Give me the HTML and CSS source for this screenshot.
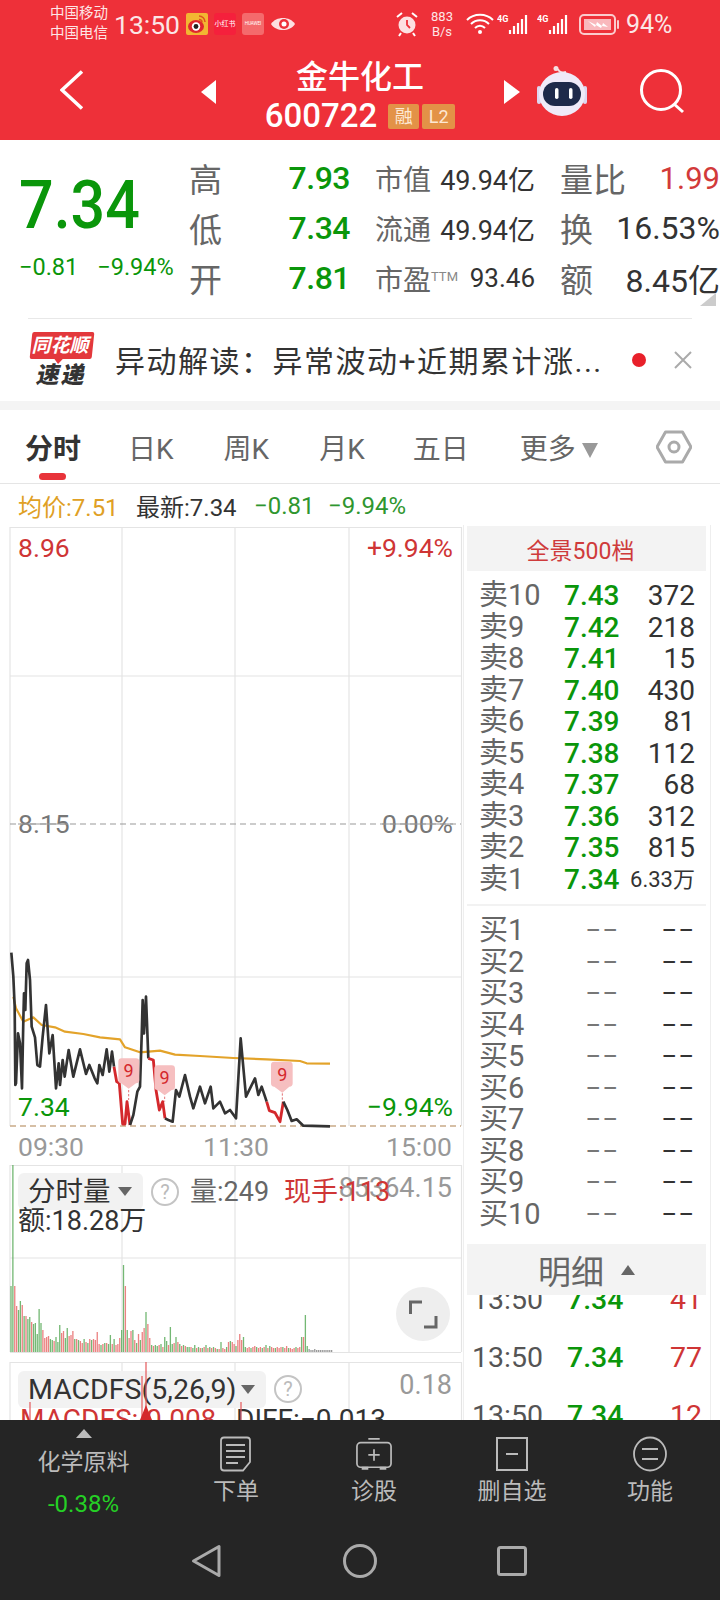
FILE: index.html
```html
<!DOCTYPE html>
<html lang="zh">
<head>
<meta charset="utf-8">
<title>金牛化工</title>
<link rel="stylesheet" href="styles.css">
</head>
<body>
<div class="page">
  <header class="header">
    <div class="status">
      <div class="carrier"><span>中国移动</span><span>中国电信</span></div>
      <div class="clock">13:50</div>
      <svg class="app-ic weibo" viewBox="0 0 22 22"><rect width="22" height="22" rx="2" fill="#f2b632"/><ellipse cx="10" cy="13.5" rx="8" ry="6.5" fill="#e0272e"/><circle cx="10" cy="13.5" r="4.2" fill="#fff"/><circle cx="10" cy="13.5" r="2.4" fill="#222"/><path d="M13 3a6 6 0 0 1 6 6M13 6.500a3 3 0 0 1 3 3" fill="none" stroke="#e0531f" stroke-width="1.500"/></svg>
      <div class="app-ic redbook">小红书</div>
      <div class="app-ic huawei">HUAWEI</div>
      <svg class="eye" viewBox="0 0 26 20"><path d="M1 10C6 2 20 2 25 10C20 18 6 18 1 10Z" fill="#fff" fill-opacity=".85"/><circle cx="14" cy="10" r="5" fill="#ee3039"/><circle cx="14" cy="10" r="2.500" fill="#fff"/></svg>
      <div class="status-right">
        <svg class="alarm" viewBox="0 0 22 26"><circle cx="11" cy="14" r="8.500" fill="#fff" fill-opacity=".85"/><path d="M11 9v5l3 3" stroke="#ee3039" stroke-width="1.800" fill="none"/><path d="M1 6l5-4M21 6l-5-4M5 22l-2 3M17 22l2 3" stroke="#fff" stroke-width="2" fill="none"/></svg>
        <div class="speed"><span>883</span><span>B/s</span></div>
        <svg class="wifi" viewBox="0 0 28 22"><path d="M1 7C8 0 20 0 27 7M5 11C10 6 18 6 23 11M9 15c3-3 7-3 10 0" fill="none" stroke="#fff" stroke-width="2"/><circle cx="14" cy="19" r="2" fill="#fff"/></svg>
        <svg class="signal" viewBox="0 0 34 22"><text x="0" y="9" class="net">4G</text><path d="M13 21v-4M17 21v-8M21 21v-11M25 21v-15M29 21v-19" stroke="#fff" stroke-width="2.200"/></svg>
        <svg class="signal" viewBox="0 0 34 22"><text x="0" y="9" class="net">4G</text><path d="M13 21v-4M17 21v-8M21 21v-11M25 21v-15M29 21v-19" stroke="#fff" stroke-width="2.200"/></svg>
        <svg class="battery" viewBox="0 0 40 21"><rect x="1" y="1" width="35" height="19" rx="4" fill="none" stroke="#fff" stroke-opacity=".75" stroke-width="2"/><rect x="5" y="5" width="27" height="11" fill="#f9b8bc"/><path d="M9 7l8 4 1-3 5 4 1-3 5 4-6-1-1 2-5-3-1 2z" fill="#fff"/><rect x="38" y="6" width="2" height="9" rx="1" fill="#fff" fill-opacity=".75"/></svg>
        <div class="pct">94%</div>
      </div>
    </div>
    <div class="nav">
      <svg class="back" viewBox="0 0 24 40"><path d="M22 1.500L2 20L22 38.500" fill="none" stroke="#fff" stroke-width="3.500"/></svg>
      <div class="tri-left"></div>
      <div class="title">
        <div class="name">金牛化工</div>
        <div class="code-row"><span class="code">600722</span><span class="badge badge-first">融</span><span class="badge">L2</span></div>
      </div>
      <div class="tri-right"></div>
      <svg class="robot" viewBox="0 0 50 52"><path d="M21 4c1 3 4 4 8 3" fill="none" stroke="#f6dfe2" stroke-width="2"/><circle cx="19" cy="3.500" r="2.500" fill="#f6dfe2"/><rect x="0" y="21" width="4" height="18" rx="2" fill="#ddd6f0"/><rect x="46" y="21" width="4" height="18" rx="2" fill="#ddd6f0"/><ellipse cx="25" cy="29" rx="23" ry="22" fill="#efeaf8"/><rect x="6" y="17" width="38" height="24" rx="12" fill="#1e2a4a"/><rect x="18" y="23" width="3.500" height="11" rx="1.750" fill="#fff"/><rect x="32" y="23" width="3.500" height="11" rx="1.750" fill="#fff"/></svg>
      <svg class="search" viewBox="0 0 46 46"><circle cx="22" cy="21" r="19.500" fill="none" stroke="#fff" stroke-width="3"/><path d="M35 35l9 8" stroke="#fff" stroke-width="3"/></svg>
    </div>
  </header>

  <section class="quote">
    <div class="price-box">
      <div class="big">7.34</div>
      <div class="change"><span>−0.81</span><span>−9.94%</span></div>
    </div>
    <div class="stats">
      <div class="stat-row">
        <span class="lab">高</span><span class="val">7.93</span>
        <span class="mid"><span class="mlab">市值</span><span class="mval">49.94亿</span></span>
        <span class="far"><span class="lab">量比</span><span class="fval red">1.99</span></span>
      </div>
      <div class="stat-row">
        <span class="lab">低</span><span class="val">7.34</span>
        <span class="mid"><span class="mlab">流通</span><span class="mval">49.94亿</span></span>
        <span class="far"><span class="lab">换</span><span class="fval">16.53%</span></span>
      </div>
      <div class="stat-row">
        <span class="lab">开</span><span class="val">7.81</span>
        <span class="mid"><span class="mlab">市盈<sup class="ttm">TTM</sup></span><span class="mval pe">93.46</span></span>
        <span class="far"><span class="lab">额</span><span class="fval">8.45亿</span></span>
      </div>
    </div>
    <div class="corner"></div>
  </section>

  <section class="news">
    <div class="logo">
      <div class="logo-top"><span>同花顺</span></div>
      <div class="logo-bottom">速递</div>
    </div>
    <div class="news-text">异动解读&#xFF1A;异常波动+近期累计涨...</div>
    <div class="dot"></div>
    <svg class="close" viewBox="0 0 18 18"><path d="M1 1l16 16M17 1L1 17" stroke="#aaa" stroke-width="2"/></svg>
  </section>
  <div class="gap"></div>

  <nav class="tabs">
    <span class="tab active">分时</span>
    <span class="tab t2">日K</span>
    <span class="tab t3">周K</span>
    <span class="tab t4">月K</span>
    <span class="tab t5">五日</span>
    <span class="tab t6">更多</span>
    <span class="more-tri"></span>
    <svg class="hex" viewBox="0 0 36 36"><path d="M9.500 3h17L35 18l-8.500 15h-17L1 18z" fill="none" stroke="#aaa" stroke-width="3" stroke-linejoin="round"/><circle cx="18" cy="18" r="5" fill="none" stroke="#aaa" stroke-width="3"/></svg>
  </nav>

  <div class="legend">
    <span class="l-avg">均价:7.51</span>
    <span class="l-new">最新:7.34</span>
    <span class="l-chg">−0.81</span>
    <span class="l-chg">−9.94%</span>
  </div>

  <main class="main">
    <div class="charts">
      <svg class="price-chart" viewBox="0 525 463 640">
        <path class="grid" d="M10 527.500H461M10 676H461M10 977H461M10 527V1126M122 527V1126M235 527V1126M349 527V1126M461.500 527V1126"/>
        <path class="mid-dash" d="M10 824H461"/>
        <path class="base-dash" d="M10 1126H461"/>
        <text class="ct red-t" x="18" y="557">8.96</text>
        <text class="ct red-t end" x="453" y="557">+9.94%</text>
        <text class="ct gray-t" x="18" y="833">8.15</text>
        <text class="ct gray-t end" x="453" y="833">0.00%</text>
        <path class="strike" d="M18 824H68M382 824H453"/>
        <g transform="translate(0 920) scale(.33333)">
          <path class="avg" d="M40 230L48 265L70 305L100 292L125 315L165 322L195 335L250 342L300 352L360 358L375 382L420 397L480 392L525 404L600 408L700 414L800 418L900 423L920 430L990 431"/>
          <path class="line-b" d="M34 98L40 170L44 260L46 495L48 490L54 340L60 370L66 505L70 300L72 220L76 270L80 130L84 120L90 180L95 320L105 352L112 435L120 440L128 350L138 255L148 400L158 345L168 505L176 430L180 495L188 420L194 470L206 390L220 470L240 388L258 462L268 435L284 475L292 490L298 435L308 465L320 388L328 455L336 395L342 440"/>
          <path class="line-r" d="M342 440L350 485L358 490L360 515L368 612L375 612L381 545L390 615"/>
          <path class="line-b" d="M390 615L400 585L412 515L420 500L425 350L428 240L432 340L438 230L445 415"/>
          <path class="line-r" d="M445 415L460 420L468 510L478 570L488 545L495 595"/>
          <path class="line-b" d="M495 595L505 600L518 605L528 510L538 530L555 465L570 530L580 565L600 500L615 550L632 500L640 565L660 545L675 580L690 570L708 595L722 355L738 530L765 475L775 525L785 500L800 545"/>
          <path class="line-r" d="M800 545L808 572L825 578L840 605L850 545"/>
          <path class="line-b" d="M850 545L862 570L875 603L890 598L910 617L990 619"/>
          <path class="pin" d="M365 415H408Q418 415 418 425V480Q418 490 408 490L386 506L364 490Q355 490 355 480V425Q355 415 365 415Z"/>
          <path class="pin" d="M473 436H515Q525 436 525 446V500Q525 510 515 510L494 526L473 510Q463 510 463 500V446Q463 436 473 436Z"/>
          <path class="pin" d="M823 425H868Q878 425 878 435V490Q878 500 868 500L847 518L823 500Q813 500 813 490V435Q813 425 823 425Z"/>
          <path class="pin-dash" d="M386 510V540M494 530V545M847 520V545"/>
          <text class="pin-t" x="386" y="472">9</text>
          <text class="pin-t" x="494" y="492">9</text>
          <text class="pin-t" x="847" y="482">9</text>
        </g>
        <text class="ct green-t" x="18" y="1116">7.34</text>
        <text class="ct green-t end" x="453" y="1116">−9.94%</text>
        <text class="ct time-t" x="18" y="1156">09:30</text>
        <text class="ct time-t" x="236" y="1156" text-anchor="middle">11:30</text>
        <text class="ct time-t end" x="452" y="1156">15:00</text>
      </svg>

      <svg class="vol-chart" viewBox="0 1165 463 197">
        <path class="grid" d="M10 1165.500H461M10 1258H461M10 1352.500H461M10 1165V1352M122 1165V1352M235 1165V1352M349 1165V1352M461.500 1165V1352"/>
        <g transform="translate(11 1352) scale(1.875 1)">
          <path class="bar-g" d="M0 0V-66M1 0V-187M4 0V-42M5 0V-51M7 0V-36M9 0V-33M10 0V-35M12 0V-28M13 0V-29M14 0V-18M15 0V-43M16 0V-29M21 0V-13M22 0V-12M24 0V-15M25 0V-10M26 0V-27M29 0V-14M30 0V-24M34 0V-13M36 0V-12M39 0V-13M41 0V-9M43 0V-12M48 0V-7M50 0V-9M52 0V-8M53 0V-17M55 0V-13M59 0V-22M60 0V-87M62 0V-22M65 0V-22M67 0V-9M69 0V-12M72 0V-40M75 0V-7M77 0V-7M78 0V-6M80 0V-8M82 0V-15M83 0V-11M85 0V-25M86 0V-8M88 0V-15M90 0V-8M92 0V-7M94 0V-5M95 0V-5M97 0V-4M98 0V-7M100 0V-5M102 0V-4M104 0V-7M106 0V-5M108 0V-5M110 0V-3M112 0V-10M115 0V-5M117 0V-11M120 0V-6M124 0V-15M125 0V-5M128 0V-4M131 0V-5M134 0V-4M136 0V-7M138 0V-6M141 0V-4M145 0V-5M148 0V-4M152 0V-5M155 0V-15M157 0V-37M158 0V-6"/>
          <path class="bar-r" d="M2 0V-66M3 0V-46M6 0V-47M8 0V-36M11 0V-30M17 0V-22M18 0V-14M19 0V-15M20 0V-16M23 0V-11M27 0V-19M28 0V-21M31 0V-16M32 0V-17M33 0V-21M35 0V-13M37 0V-11M38 0V-9M40 0V-10M42 0V-13M44 0V-13M45 0V-12M46 0V-20M47 0V-8M49 0V-8M51 0V-9M54 0V-8M56 0V-7M57 0V-8M58 0V-14M61 0V-66M63 0V-14M64 0V-21M66 0V-12M68 0V-18M70 0V-20M71 0V-24M73 0V-28M74 0V-14M76 0V-6M79 0V-7M81 0V-5M84 0V-7M87 0V-9M89 0V-10M91 0V-6M93 0V-6M96 0V-5M99 0V-4M101 0V-4M103 0V-5M105 0V-4M107 0V-4M109 0V-4M111 0V-3M113 0V-4M114 0V-3M116 0V-10M118 0V-10M119 0V-8M121 0V-12M122 0V-18M123 0V-12M126 0V-4M127 0V-5M129 0V-5M130 0V-6M132 0V-4M133 0V-5M135 0V-5M137 0V-4M139 0V-5M140 0V-4M142 0V-5M143 0V-4M144 0V-5M146 0V-4M147 0V-6M149 0V-4M150 0V-3M151 0V-4M153 0V-4M154 0V-5M156 0V-15"/>
          <path class="bar-n" d="M159 0V-3M160 0V-2M161 0V-2M162 0V-3M163 0V-2M164 0V-2M165 0V-2M166 0V-2M167 0V-2M168 0V-2M169 0V-2M170 0V-2M171 0V-2"/>
        </g>
        <rect class="chip" x="18" y="1173" width="125" height="37" rx="6"/>
        <text class="sel" x="28" y="1201">分时量</text>
        <path class="sel-tri" d="M118 1187H132L125 1196Z"/>
        <circle class="help" cx="165" cy="1192" r="13"/>
        <text class="help-t" x="165" y="1199">?</text>
        <text class="ind gray-2" x="190" y="1201">量:249</text>
        <text class="ind faded end" x="452" y="1197">85364.15</text>
        <text class="ind red-t" x="284" y="1201">现手:113</text>
        <text class="ind dark-t" x="18" y="1230">额:18.28万</text>
        <circle class="expand" cx="423" cy="1314" r="27"/>
        <path class="expand-ic" d="M410.500 1314V1302H422M436 1316V1327H424"/>
      </svg>

      <svg class="macd-chart" viewBox="0 1362 463 58">
        <path class="grid" d="M10 1362.500H461M10 1362V1420M122 1362V1420M235 1362V1420M349 1362V1420M461.500 1362V1420"/>
        <rect class="chip" x="18" y="1371" width="248" height="37" rx="6"/>
        <text class="sel macd-sel" x="28" y="1399">MACDFS(5,26,9)</text>
        <path class="sel-tri" d="M241 1385H255L248 1394Z"/>
        <circle class="help" cx="288" cy="1389" r="13"/>
        <text class="help-t" x="288" y="1396">?</text>
        <text class="ind faded end" x="452" y="1394">0.18</text>
        <text class="ind red-t macd-l" x="20" y="1429">MACDFS:-0.008</text>
        <text class="ind dark-t macd-l" x="236" y="1429">DIFF:−0.013</text>
        <path class="macd-bar" d="M30 1402V1420M142 1376V1420M146 1362V1420M241 1402V1420"/>
        <path class="macd-peak" d="M146 1405L152 1420H140Z"/>
      </svg>
    </div>

    <aside class="book">
      <div class="book-head panorama">全景500档</div>
      <div class="levels sell">
        <div class="lv"><span class="lv-l">卖10</span><span class="lv-p">7.43</span><span class="lv-q">372</span></div>
        <div class="lv"><span class="lv-l">卖9</span><span class="lv-p">7.42</span><span class="lv-q">218</span></div>
        <div class="lv"><span class="lv-l">卖8</span><span class="lv-p">7.41</span><span class="lv-q">15</span></div>
        <div class="lv"><span class="lv-l">卖7</span><span class="lv-p">7.40</span><span class="lv-q">430</span></div>
        <div class="lv"><span class="lv-l">卖6</span><span class="lv-p">7.39</span><span class="lv-q">81</span></div>
        <div class="lv"><span class="lv-l">卖5</span><span class="lv-p">7.38</span><span class="lv-q">112</span></div>
        <div class="lv"><span class="lv-l">卖4</span><span class="lv-p">7.37</span><span class="lv-q">68</span></div>
        <div class="lv"><span class="lv-l">卖3</span><span class="lv-p">7.36</span><span class="lv-q">312</span></div>
        <div class="lv"><span class="lv-l">卖2</span><span class="lv-p">7.35</span><span class="lv-q">815</span></div>
        <div class="lv"><span class="lv-l">卖1</span><span class="lv-p">7.34</span><span class="lv-q small">6.33万</span></div>
      </div>
      <div class="book-div"></div>
      <div class="levels buy">
        <div class="lv"><span class="lv-l">买1</span><span class="lv-p none">−−</span><span class="lv-q">−−</span></div>
        <div class="lv"><span class="lv-l">买2</span><span class="lv-p none">−−</span><span class="lv-q">−−</span></div>
        <div class="lv"><span class="lv-l">买3</span><span class="lv-p none">−−</span><span class="lv-q">−−</span></div>
        <div class="lv"><span class="lv-l">买4</span><span class="lv-p none">−−</span><span class="lv-q">−−</span></div>
        <div class="lv"><span class="lv-l">买5</span><span class="lv-p none">−−</span><span class="lv-q">−−</span></div>
        <div class="lv"><span class="lv-l">买6</span><span class="lv-p none">−−</span><span class="lv-q">−−</span></div>
        <div class="lv"><span class="lv-l">买7</span><span class="lv-p none">−−</span><span class="lv-q">−−</span></div>
        <div class="lv"><span class="lv-l">买8</span><span class="lv-p none">−−</span><span class="lv-q">−−</span></div>
        <div class="lv"><span class="lv-l">买9</span><span class="lv-p none">−−</span><span class="lv-q">−−</span></div>
        <div class="lv"><span class="lv-l">买10</span><span class="lv-p none">−−</span><span class="lv-q">−−</span></div>
      </div>
      <div class="book-head detail"><span>明细</span><span class="up-tri"></span></div>
      <div class="ticks">
        <div class="tick"><span class="tk-t">13:50</span><span class="tk-p">7.34</span><span class="tk-q">41</span></div>
        <div class="tick"><span class="tk-t">13:50</span><span class="tk-p">7.34</span><span class="tk-q">77</span></div>
        <div class="tick"><span class="tk-t">13:50</span><span class="tk-p">7.34</span><span class="tk-q">12</span></div>
      </div>
    </aside>
  </main>

  <footer class="footer">
    <div class="actions">
      <div class="sector">
        <span class="sector-tri"></span>
        <span class="sector-name">化学原料</span>
        <span class="sector-pct">-0.38%</span>
      </div>
      <div class="act">
        <svg class="act-ic" viewBox="0 0 36 36"><path d="M6 1.500H29Q32 1.500 32 4.500V26L25 34.500H6Q3 34.500 3 31.500V4.500Q3 1.500 6 1.500Z" fill="none" stroke="#bbb" stroke-width="1.800"/><path d="M8 9H27M8 15H27M8 21H27M8 27H20" stroke="#bbb" stroke-width="1.800"/></svg>
        <span class="act-l">下单</span>
      </div>
      <div class="act">
        <svg class="act-ic" viewBox="0 0 38 36"><rect x="1" y="6" width="36" height="26" rx="4" fill="none" stroke="#bbb" stroke-width="1.800"/><path d="M13 2H25M19 13V25M13 19H25" stroke="#bbb" stroke-width="1.800"/><path d="M6 33H13M25 33H32" stroke="#bbb" stroke-width="3"/></svg>
        <span class="act-l">诊股</span>
      </div>
      <div class="act">
        <svg class="act-ic" viewBox="0 0 34 36"><rect x="2" y="2" width="30" height="32" fill="none" stroke="#bbb" stroke-width="2"/><path d="M11 18H23" stroke="#bbb" stroke-width="2"/></svg>
        <span class="act-l">删自选</span>
      </div>
      <div class="act">
        <svg class="act-ic" viewBox="0 0 36 36"><ellipse cx="18" cy="18" rx="16" ry="16.500" fill="none" stroke="#bbb" stroke-width="1.800"/><path d="M10 13H26M10 23H26" stroke="#bbb" stroke-width="1.800"/></svg>
        <span class="act-l">功能</span>
      </div>
    </div>
    <div class="sysnav">
      <svg class="sys-back" viewBox="0 0 30 34"><path d="M28 2.500V31.500L2.500 17Z" fill="none" stroke="#aaa" stroke-width="3" stroke-linejoin="round"/></svg>
      <svg class="sys-home" viewBox="0 0 34 34"><circle cx="17" cy="17" r="15.500" fill="none" stroke="#aaa" stroke-width="3"/></svg>
      <svg class="sys-recent" viewBox="0 0 30 30"><rect x="1.500" y="1.500" width="27" height="27" rx="2" fill="none" stroke="#aaa" stroke-width="3"/></svg>
    </div>
  </footer>
</div>
</body>
</html>
```

FILE: styles.css
```css
* { box-sizing: border-box; }
html, body { margin: 0; padding: 0; }
body { background: #fff; font-family: Roboto, "Noto Sans CJK SC", sans-serif; color: #333; }
svg { display: block; flex: none; }
.page { width: 720px; height: 1600px; overflow: hidden; display: flex; flex-direction: column; }

/* header */
.header { height: 140px; background: #ee3039; color: #fff; flex: none; }
.status { height: 48px; display: flex; align-items: center; padding-left: 50px; }
.carrier { width: 64px; display: flex; flex-direction: column; font-size: 14.500px; line-height: 20px; color: #fde6e6; white-space: nowrap; }
.clock { font-size: 26.500px; width: 72px; color: #fbe6e6; }
.app-ic { width: 22px; height: 22px; }
.weibo { margin-right: 6px; }
.redbook { background: #f5203c; border-radius: 3px; font-size: 7px; line-height: 22px; text-align: center; margin-right: 6px; white-space: nowrap; }
.huawei { background: #f46a6c; border-radius: 3px; font-size: 4.500px; line-height: 22px; text-align: center; overflow: hidden; }
.eye { width: 26px; height: 20px; margin-left: 6px; }
.status-right { margin-left: auto; display: flex; align-items: center; padding-right: 45px; }
.alarm { width: 22px; height: 26px; }
.speed { display: flex; flex-direction: column; align-items: center; font-size: 13px; line-height: 15px; width: 26px; margin-left: 11px; color: #fde6e6; }
.wifi { width: 28px; height: 22px; margin-left: 11px; }
.net { font-size: 9px; font-weight: 700; fill: #fff; }
.signal { width: 34px; height: 22px; margin-left: 3px; }
.signal + .signal { margin-left: 6px; }
.battery { width: 40px; height: 21px; margin-left: 8px; }
.pct { font-size: 25px; margin-left: 7px; width: 49px; color: #fbe6e6; white-space: nowrap; }

.nav { height: 92px; display: flex; align-items: flex-start; padding-left: 60px; position: relative; }
.back { width: 24px; height: 40px; margin-top: 22px; }
.tri-left { width: 0; height: 0; margin-left: 117px; margin-top: 32px; border-top: 12px solid transparent; border-bottom: 12px solid transparent; border-right: 15px solid #fff; }
.tri-right { width: 0; height: 0; margin-top: 32px; border-top: 12px solid transparent; border-bottom: 12px solid transparent; border-left: 16px solid #fff; }
.title { width: 288px; display: flex; flex-direction: column; align-items: center; padding-top: 10px; }
.name { font-size: 32px; line-height: 38px; font-weight: 500; }
.code-row { display: flex; align-items: center; height: 38px; margin-top: 1px; }
.code { font-size: 33px; font-weight: 500; line-height: 38px; }
.badge { background: #e39247; color: #fde8d4; border-radius: 2px; height: 25px; line-height: 25px; width: 33px; font-size: 18px; text-align: center; margin-left: 3px; }
.badge-first { margin-left: 11px; width: 31px; }
.robot { width: 50px; height: 52px; margin-left: 17px; margin-top: 17px; }
.search { width: 46px; height: 46px; margin-left: 52px; margin-top: 21px; }

/* quote */
.quote { height: 178px; flex: none; display: flex; padding-top: 13px; position: relative; }
.price-box { width: 190px; padding-left: 19px; flex: none; }
.big { font-size: 61px; font-weight: 500; color: #0a960a; height: 104px; line-height: 104px; transform: scaleY(1.1); }
.change { display: flex; font-size: 23.500px; line-height: 20px; color: #0a960a; gap: 19px; white-space: nowrap; }
.stats { display: flex; flex-direction: column; margin-left: -1px; }
.stat-row { height: 50px; display: flex; align-items: center; white-space: nowrap; }
.stat-row > .lab { width: 61px; }
.lab { font-size: 33px; color: #666; flex: none; }
.val { width: 100px; text-align: right; font-size: 32px; letter-spacing: -.5px; font-weight: 500; color: #0a960a; }
.mid { width: 185px; padding-left: 25px; display: flex; justify-content: space-between; align-items: center; }
.mlab { font-size: 28px; color: #666; }
.ttm { font-size: 13px; color: #888; vertical-align: 9px; line-height: 0; }
.mval { font-size: 27px; color: #333; }
.mval.pe { font-size: 26px; }
.far { width: 160px; margin-left: 25px; display: flex; justify-content: space-between; align-items: center; }
.fval { font-size: 32px; color: #333; }
.fval.red { color: #d23a3a; font-size: 31px; }
.corner { position: absolute; right: 4px; top: 153px; width: 16px; height: 13px; background: #ccc; clip-path: polygon(100% 0, 100% 100%, 0 100%); }

/* news */
.news { height: 83px; flex: none; display: flex; align-items: center; padding-left: 29px; position: relative; }
.news::before { content: ""; position: absolute; left: 28px; right: 28px; top: 0; height: 1px; background: #e8e8e8; }
.logo { width: 66px; display: flex; flex-direction: column; align-items: center; }
.logo-top { width: 62px; height: 27px; background: #e3383c; border-radius: 2px; color: #fff; font-size: 19px; font-weight: 700; line-height: 27px; text-align: center; transform: skewX(-6deg); position: relative; white-space: nowrap; }
.logo-top span { display: inline-block; transform: skewX(-8deg); }
.logo-top::after { content: ""; position: absolute; left: 24px; bottom: -5px; width: 10px; height: 6px; background: #e3383c; clip-path: polygon(0 0, 100% 0, 50% 100%); }
.logo-bottom { font-size: 23px; line-height: 24px; margin-top: 5px; letter-spacing: 2px; font-weight: 900; color: #333; transform: skewX(-12deg); }
.news-text { font-size: 30px; letter-spacing: 1.500px; width: 498px; margin-left: 20px; color: #333; white-space: nowrap; padding-top: 4px; line-height: 40px; overflow: hidden; }
.dot { width: 14px; height: 14px; border-radius: 50%; background: #e8202a; margin-left: 19px; }
.close { width: 18px; height: 18px; margin-left: 28px; }
.gap { height: 9px; background: #f4f4f4; flex: none; }

/* tabs */
.tabs { height: 74px; flex: none; display: flex; align-items: center; padding: 7px 28px 0 25px; border-bottom: 1px solid #e5e5e5; font-size: 28px; color: #666; white-space: nowrap; }
.tab { position: relative; line-height: 40px; }
.tab.active { font-weight: 700; color: #333; }
.tab.active::after { content: ""; position: absolute; left: 14px; top: 43px; width: 27px; height: 7px; border-radius: 4px; background: #e8333a; }
.t2 { margin-left: 47px; }
.t3 { margin-left: 50px; }
.t4 { margin-left: 50px; }
.t5 { margin-left: 48px; }
.t6 { margin-left: 51px; }
.more-tri { width: 0; height: 0; margin-left: 6px; border-left: 8.500px solid transparent; border-right: 8.500px solid transparent; border-top: 15px solid #999; }
.hex { width: 36px; height: 36px; margin-left: auto; margin-top: -7px; }

.legend { height: 41px; flex: none; display: flex; align-items: center; padding: 2px 0 0 18px; font-size: 24px; white-space: nowrap; }
.l-avg { color: #e0a024; width: 118px; }
.l-new { color: #333; width: 118px; }
.l-chg { color: #2f962f; width: 74px; }

/* main */
.main { height: 895px; flex: none; display: flex; overflow: hidden; }
.charts { width: 463px; flex: none; display: flex; flex-direction: column; }
.price-chart { width: 463px; height: 640px; }
.vol-chart { width: 463px; height: 197px; }
.macd-chart { width: 463px; height: 58px; }
.grid { fill: none; stroke: #e4e4e4; stroke-width: 1.200; }
.mid-dash { stroke: #999; stroke-width: 1; stroke-dasharray: 6 4; fill: none; }
.base-dash { stroke: #c9ab88; stroke-width: 1.500; stroke-dasharray: 6 4; fill: none; }
.strike { stroke: #999; stroke-width: 1; }
.ct { font-size: 26.500px; }
.end { text-anchor: end; }
.red-t { fill: #cf3535; }
.gray-t { fill: #777; }
.green-t { fill: #0a960a; }
.time-t { fill: #999; }
.avg { fill: none; stroke: #e3a32a; stroke-width: 6.500; stroke-linejoin: round; }
.line-b { fill: none; stroke: #333; stroke-width: 8; stroke-linejoin: round; }
.line-r { fill: none; stroke: #d4282c; stroke-width: 8.500; stroke-linejoin: round; }
.pin { fill: #f6bfc0; }
.pin-dash { stroke: #d4282c; stroke-width: 2; stroke-dasharray: 7 5; fill: none; }
.pin-t { font-size: 54px; fill: #d4282c; text-anchor: middle; }
.bar-g { stroke: #5cab5c; stroke-width: .7; fill: none; stroke-opacity: .85; }
.bar-r { stroke: #e86c6c; stroke-width: .7; fill: none; stroke-opacity: .85; }
.bar-n { stroke: #999; stroke-width: .7; fill: none; }
.chip { fill: #f2f2f2; }
.sel { font-size: 27.500px; fill: #333; }
.macd-sel { font-size: 28.500px; }
.sel-tri { fill: #666; }
.help { fill: none; stroke: #c4c4c4; stroke-width: 2; }
.help-t { font-size: 20px; fill: #bbb; text-anchor: middle; }
.ind { font-size: 27px; }
.macd-l { font-size: 28px; }
.gray-2 { fill: #666; }
.faded { fill: #999; }
.dark-t { fill: #333; }
.expand { fill: #eee; }
.expand-ic { fill: none; stroke: #666; stroke-width: 3; }
.macd-bar { stroke: #e4585a; stroke-width: 1.200; fill: none; }
.macd-peak { fill: #d4282c; }

/* order book */
.book { width: 248px; flex: none; padding: 1px 4px 0 3px; border-left: 1px solid #eee; border-right: 1px solid #eee; }
.book-head { background: #f3f3f3; display: flex; align-items: center; justify-content: center; position: relative; z-index: 1; }
.panorama { height: 45px; font-size: 23px; color: #cf3b3b; padding-right: 12px; }
.levels { display: flex; flex-direction: column; padding: 0 11px 0 12px; }
.sell { margin-top: 9px; }
.buy { margin-top: 9px; }
.lv { height: 31.500px; display: grid; grid-template-columns: 85px 55px 76px; align-items: center; white-space: nowrap; }
.lv-l { font-size: 29px; color: #666; line-height: 31px; }
.lv-p { font-size: 28px; font-weight: 500; color: #0a960a; line-height: 31px; }
.lv-q { font-size: 28px; color: #333; text-align: right; line-height: 31px; }
.lv-q.small { font-size: 22px; }
.lv-p.none { color: #777; text-align: right; font-weight: 400; letter-spacing: 1px; }
.buy .lv-q { letter-spacing: 1px; }
.book-div { height: 2px; background: #f2f2f2; margin-top: 9px; }
.detail { height: 51px; margin-top: 14px; font-size: 33px; color: #666; gap: 17px; }
.up-tri { width: 0; height: 0; border-left: 7px solid transparent; border-right: 7px solid transparent; border-bottom: 10px solid #666; }
.ticks { margin-top: -25px; padding: 0 4px 0 5px; }
.tick { height: 58px; display: grid; grid-template-columns: 95px 55px 80px; align-items: center; font-size: 28.500px; }
.tk-t { color: #555; }
.tk-p { color: #0a960a; font-weight: 500; }
.tk-q { color: #cf3535; text-align: right; }

/* footer */
.footer { height: 180px; flex: none; background: #252525; color: #bbb; }
.actions { height: 120px; display: flex; }
.sector { width: 167px; flex: none; display: flex; flex-direction: column; align-items: center; padding-top: 9px; }
.sector-tri { width: 0; height: 0; border-left: 8px solid transparent; border-right: 8px solid transparent; border-bottom: 9px solid #bbb; }
.sector-name { font-size: 23px; line-height: 30px; margin-top: 10px; }
.sector-pct { font-size: 24px; line-height: 30px; margin-top: 11px; color: #25d025; }
.act { width: 138px; flex: none; display: flex; flex-direction: column; align-items: center; padding-top: 16px; }
.act-ic { width: 36px; height: 36px; }
.act-l { font-size: 23px; line-height: 30px; margin-top: 5px; white-space: nowrap; }
.sysnav { display: flex; align-items: flex-start; padding: 4px 0 0 191px; }
.sys-back { width: 30px; height: 34px; }
.sys-home { width: 34px; height: 34px; margin-left: 122px; }
.sys-recent { width: 30px; height: 30px; margin: 2px 0 0 120px; }
```
